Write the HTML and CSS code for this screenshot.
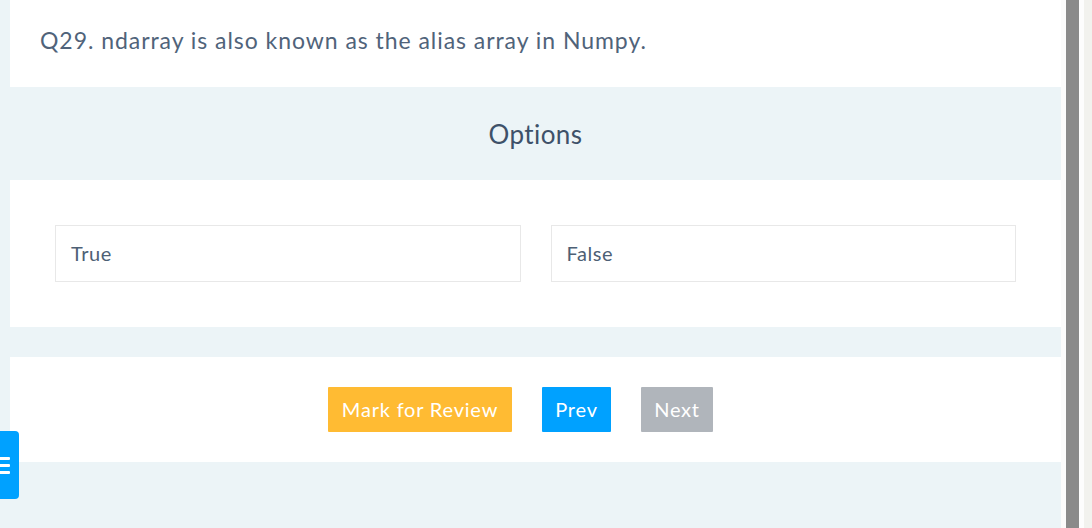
FILE: index.html
```html
<!DOCTYPE html>
<html>
<head>
<meta charset="utf-8">
<link rel="stylesheet" href="styles.css">
</head>
<body>
<div class="page">
  <div class="main">
    <div class="question">Q29. ndarray is also known as the alias array in Numpy.</div>
    <div class="options-head">Options</div>
    <div class="options-body">
      <div class="option">True</div>
      <div class="option">False</div>
    </div>
    <div class="actions">
      <button class="btn btn-review">Mark for Review</button>
      <button class="btn btn-prev">Prev</button>
      <button class="btn btn-next">Next</button>
    </div>
  </div>
  <div class="scrollbar">
    <div class="sb-edge"></div>
    <div class="sb-thumb"></div>
    <div class="sb-gap"></div>
    <div class="sb-track"></div>
  </div>
</div>
<div class="menu-toggle">
  <span class="bar"></span>
  <span class="bar"></span>
  <span class="bar"></span>
</div>
</body>
</html>
```

FILE: styles.css
```css
html, body {
  margin: 0;
  padding: 0;
  height: 100%;
  overflow: hidden;
}
body {
  background: #ecf4f7;
  font-family: Lato, "Open Sans", sans-serif;
  color: #4d6075;
}
.page {
  display: flex;
  height: 528px;
}
.main {
  width: 1061px;
  display: flex;
  flex-direction: column;
}
.question {
  margin-left: 10px;
  background: #fff;
  height: 87px;
  box-sizing: border-box;
  padding: 25px 0 0 30px;
  font-size: 23px;
  line-height: 30px;
  letter-spacing: 0.95px;
  color: #50637a;
}
.options-head {
  height: 93px;
  display: flex;
  align-items: center;
  justify-content: center;
  padding-left: 10px;
  font-size: 26px;
  letter-spacing: 0.4px;
  color: #3e5169;
}
.options-body {
  margin-left: 10px;
  background: #fff;
  height: 147px;
  box-sizing: border-box;
  padding: 45px 45px 0 45px;
  display: flex;
  gap: 30px;
}
.option {
  flex: 1;
  height: 57px;
  box-sizing: border-box;
  border: 1px solid #e8e8e8;
  padding: 0 0 2px 15px;
  display: flex;
  align-items: center;
  font-size: 20px;
  letter-spacing: 0.6px;
  color: #4d6075;
}
.actions {
  margin-top: 30px;
  margin-left: 10px;
  background: #fff;
  height: 105px;
  box-sizing: border-box;
  padding-top: 30px;
  display: flex;
  justify-content: center;
  align-items: flex-start;
}
.btn {
  border: none;
  margin: 0 30px 0 0;
  height: 45px;
  padding: 0 0 2px 0;
  font-family: inherit;
  font-size: 20px;
  letter-spacing: 0.8px;
  color: #fff;
  border-radius: 1px;
}
.btn-review { background: #ffbb33; width: 184px; }
.btn-prev { background: #00a1ff; width: 69px; }
.btn-next { background: #b0b5bb; width: 72px; }
.scrollbar {
  display: flex;
  height: 528px;
}
.sb-edge { width: 5px; background: #fbfbfb; }
.sb-thumb { width: 13px; background: #8a8a8a; }
.sb-gap { width: 5px; background: #fdfdfd; }
.sb-track { width: 8px; background: #f2f2ee; }
.menu-toggle {
  position: absolute;
  left: 0;
  top: 431px;
  width: 19px;
  height: 68px;
  background: #00a1ff;
  border-radius: 0 4px 4px 0;
  display: flex;
  flex-direction: column;
  justify-content: center;
  gap: 4px;
}
.bar {
  display: block;
  width: 10px;
  height: 3px;
  background: #fff;
  border-radius: 0 1px 1px 0;
}
```
